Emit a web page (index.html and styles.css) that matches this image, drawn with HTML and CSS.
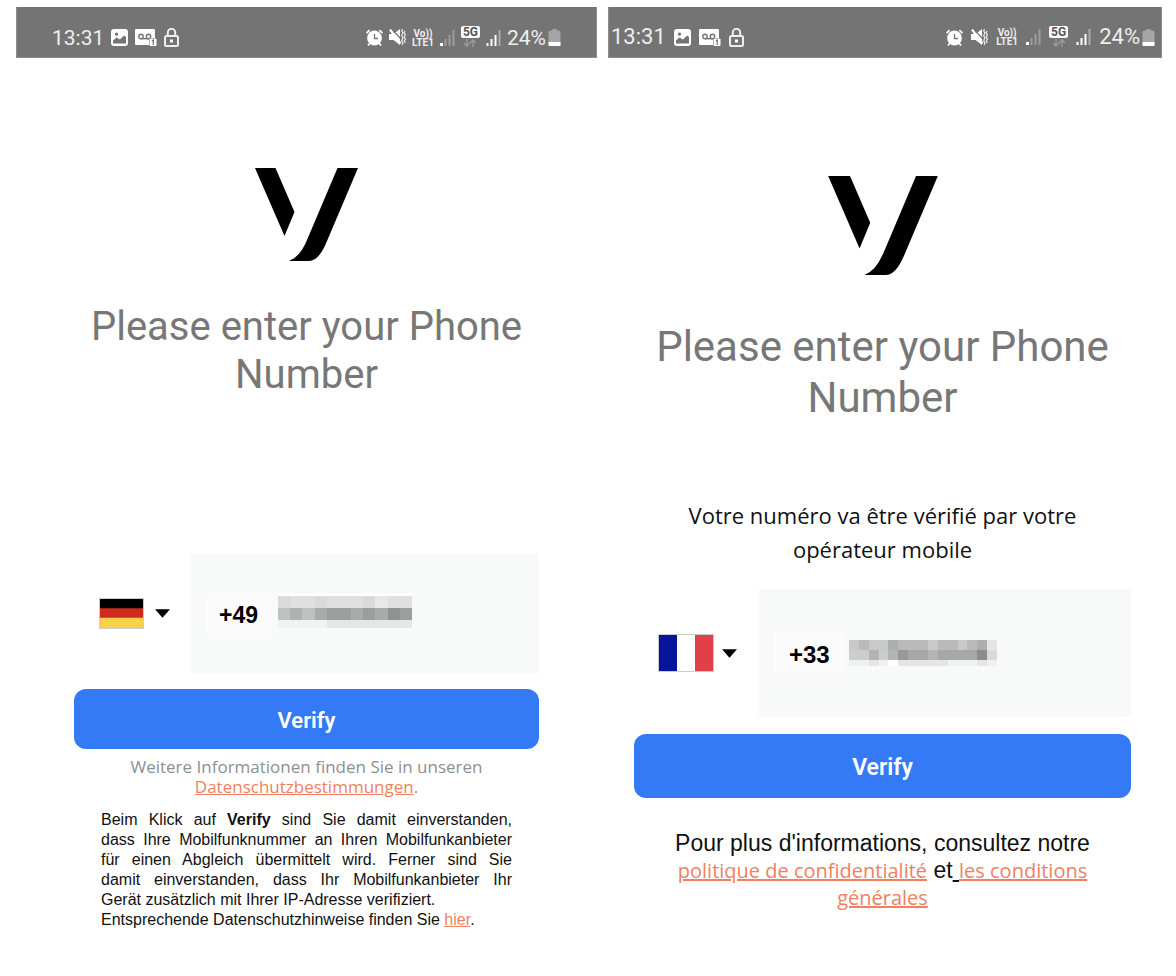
FILE: index.html
```html
<!DOCTYPE html>
<html lang="en">
<head>
    <meta charset="UTF-8">
    <meta name="viewport" content="width=device-width, initial-scale=1.0">
    <title>Verify your phone number</title>
    <link rel="stylesheet" href="styles.css">
</head>
<body>
    <!-- shared icons -->
    <svg class="sprite" width="0" height="0" aria-hidden="true">
        <symbol id="picture" viewBox="0 0 17 17">
            <path fill="#fff" fill-rule="evenodd" d="M3 0h11a3 3 0 0 1 3 3v11a3 3 0 0 1-3 3H3a3 3 0 0 1-3-3V3a3 3 0 0 1 3-3zM2 14.500h13V8l-2-1.500-4 4-3.500-2L2 11.500zM5.500 3.500a1.600 1.600 0 1 0 .01 0z"/>
        </symbol>
        <symbol id="voicemail" viewBox="0 0 22 17">
            <path fill="#fff" d="M1 0h18a1 1 0 0 1 1 1v8h-6v7H1a1 1 0 0 1-1-1V1a1 1 0 0 1 1-1z"/>
            <g fill="none" stroke="#747474" stroke-width="1.400">
                <circle cx="6" cy="7.500" r="2.200"/>
                <circle cx="13.500" cy="7.500" r="2.200"/>
                <path d="M6 9.700h8"/>
            </g>
            <rect x="14.500" y="9.500" width="7" height="7.500" rx="1" fill="#fff"/>
            <path d="M16.800 12l1.500-1v5" fill="none" stroke="#747474" stroke-width="1.200"/>
        </symbol>
        <symbol id="lock" viewBox="0 0 15 19">
            <rect x="1" y="8" width="13" height="10" rx="1.500" fill="none" stroke="#eee" stroke-width="2"/>
            <path d="M3.800 8V4.500a3.700 3.700 0 0 1 7.400 0V8" fill="none" stroke="#eee" stroke-width="2"/>
            <rect x="6" y="11.500" width="3" height="3" fill="#fff"/>
        </symbol>
        <symbol id="alarm" viewBox="0 0 17 17">
            <circle cx="8.500" cy="9" r="7.400" fill="#fff"/>
            <path d="M.6 4.200l3-3M16.400 4.200l-3-3M4 14l-2 2.500M13 14l2 2.500" fill="none" stroke="#fff" stroke-width="1.800"/>
            <path d="M8.500 5v4.500h3.500" fill="none" stroke="#747474" stroke-width="1.300"/>
        </symbol>
        <symbol id="mute" viewBox="0 0 17 17">
            <path fill="#fff" d="M0 5h4.500L11 0v16l-6.500-5H0z"/>
            <path d="M3.500 1l8 8.500" stroke="#747474" stroke-width="1.200"/>
            <path d="M1 .5l10.500 14" stroke="#fff" stroke-width="2.200"/>
            <path d="M13.500 0l-.8 2 1.200 2-1.200 2.500 1.200 2.500-1.200 2.500 1.200 2.500-.8 2M16 2l-.8 1.800 1.200 2-1.200 2 1.200 2.200-1.200 2 1.200 2" fill="none" stroke="#eee" stroke-width="1.200"/>
        </symbol>
        <symbol id="signal-low" viewBox="0 0 15 16">
            <rect y="13" width="3" height="3" fill="#fff"/>
            <path d="M5.500 9v7M9.500 5v11M13.500 0v16" stroke="#9c9c9c" stroke-width="2"/>
        </symbol>
        <symbol id="signal" viewBox="0 0 15 16">
            <path d="M1.500 13v3M5.500 9v7M9.500 5v11" stroke="#fff" stroke-width="2"/>
            <path d="M13.500 0v16" stroke="#aaa" stroke-width="2"/>
        </symbol>
        <symbol id="data" viewBox="0 0 14 8">
            <path d="M4 0v7M1 4l3 3 3-3M10 8V1M7 4l3-3 3 3" fill="none" stroke="#9c9c9c" stroke-width="1.300"/>
        </symbol>
        <symbol id="battery" viewBox="0 0 12 17">
            <path fill="#a5a5a5" d="M4 0h4v1.500h2a2 2 0 0 1 2 2V17H0V3.500a2 2 0 0 1 2-2h2z"/>
            <path fill="#fff" d="M0 13h12v2.500a1.500 1.500 0 0 1-1.500 1.500h-9A1.500 1.500 0 0 1 0 15.500z"/>
        </symbol>
        <symbol id="logo" viewBox="0 0 103 93">
            <path d="M0 0h20.500L39.500 44 29.500 68zM82.500 0H103L72 73q-8 20-18 20H34q11-4 18-21z"/>
        </symbol>
    </svg>

    <main class="screens">
        <section class="phone phone-de">
            <header class="status-bar">
                <div class="status-group">
                    <span class="clock">13:31</span>
                    <svg class="icon"><use href="#picture"/></svg>
                    <svg class="icon icon-wide"><use href="#voicemail"/></svg>
                    <svg class="icon icon-lock"><use href="#lock"/></svg>
                </div>
                <div class="status-group status-right">
                    <svg class="icon"><use href="#alarm"/></svg>
                    <svg class="icon"><use href="#mute"/></svg>
                    <span class="volte"><span>Vo))</span><span>LTE1</span></span>
                    <svg class="icon icon-signal"><use href="#signal-low"/></svg>
                    <span class="network"><span>5G</span><svg><use href="#data"/></svg></span>
                    <svg class="icon icon-signal"><use href="#signal"/></svg>
                    <span class="charge">24%<svg><use href="#battery"/></svg></span>
                </div>
            </header>
            <form class="content">
                <svg class="logo"><use href="#logo"/></svg>
                <h1>Please enter your Phone Number</h1>
                <div class="number-row">
                    <div class="country">
                        <svg class="flag" viewBox="0 0 45 31" preserveAspectRatio="none">
                            <path fill="#000" d="M0 0h45v11H0z"/>
                            <path fill="#cf2b1e" d="M0 10h45v11H0z"/>
                            <path fill="#f7d14a" d="M0 20h45v11H0z"/>
                        </svg>
                        <svg class="caret" viewBox="0 0 16 9"><path d="M0 0h16L8 9z"/></svg>
                        <select aria-label="Land"><option>DE</option></select>
                    </div>
                    <div class="number">
                        <input type="tel" value="+49" aria-label="Telefonnummer">
                        <svg class="masked" viewBox="0 0 11 35" preserveAspectRatio="none" shape-rendering="crispEdges">
                            <path fill="#fff" d="M0 0h11v3H0z"/>
                            <path fill="#dfe0e0" d="M0 3h11v12H0z"/>
                            <path fill="#d9dbda" d="M0 3h1v12H0zM3 3h1v12H3zM7 3h1v12H7z"/>
                            <path fill="#e8e8e8" d="M8 3h1v12H8z"/>
                            <path fill="#9c9d9d" d="M0 15h11v12H0z"/>
                            <path fill="#bfc1c0" d="M0 15h1v12H0zM2 15h1v12H2z"/>
                            <path fill="#b0b2b1" d="M1 15h1v12H1z"/>
                            <path fill="#a9aaaa" d="M3 15h1v12H3zM6 15h1v12H6zM8 15h1v12H8z"/>
                            <path fill="#909191" d="M9 15h1v12H9z"/>
                            <path fill="#e5e6e6" d="M0 27h11v8H0z"/>
                            <path fill="#f1f2f2" d="M0 27h4v8H0z"/>
                        </svg>
                    </div>
                </div>
                <button class="verify" type="submit">Verify</button>
                <p class="info">Weitere Informationen finden Sie in unseren <a href="#">Datenschutzbestimmungen</a>.</p>
                <p class="terms">Beim Klick auf <b>Verify</b> sind Sie damit einverstanden, dass&nbsp;Ihre Mobilfunknummer an Ihren Mobilfunkanbieter für einen Abgleich übermittelt wird. Ferner sind Sie damit&nbsp;einverstanden, dass Ihr Mobilfunkanbieter Ihr Gerät&nbsp;zusätzlich mit Ihrer IP-Adresse verifiziert.<br>Entsprechende Datenschutzhinweise finden Sie <a href="#">hier</a>.</p>
            </form>
        </section>

        <section class="phone phone-fr">
            <header class="status-bar">
                <div class="status-group">
                    <span class="clock">13:31</span>
                    <svg class="icon"><use href="#picture"/></svg>
                    <svg class="icon icon-wide"><use href="#voicemail"/></svg>
                    <svg class="icon icon-lock"><use href="#lock"/></svg>
                </div>
                <div class="status-group status-right">
                    <svg class="icon"><use href="#alarm"/></svg>
                    <svg class="icon"><use href="#mute"/></svg>
                    <span class="volte"><span>Vo))</span><span>LTE1</span></span>
                    <svg class="icon icon-signal"><use href="#signal-low"/></svg>
                    <span class="network"><span>5G</span><svg><use href="#data"/></svg></span>
                    <svg class="icon icon-signal"><use href="#signal"/></svg>
                    <span class="charge">24%<svg><use href="#battery"/></svg></span>
                </div>
            </header>
            <form class="content">
                <svg class="logo"><use href="#logo"/></svg>
                <h1>Please enter your Phone Number</h1>
                <p class="operator">Votre numéro va être vérifié par votre opérateur mobile</p>
                <div class="number-row">
                    <div class="country">
                        <svg class="flag" viewBox="0 0 54 36" preserveAspectRatio="none">
                            <path fill="#07159a" d="M0 0h18v36H0z"/>
                            <path fill="#fff" d="M18 0h18v36H18z"/>
                            <path fill="#e14049" d="M36 0h18v36H36z"/>
                        </svg>
                        <svg class="caret" viewBox="0 0 16 9"><path d="M0 0h16L8 9z"/></svg>
                        <select aria-label="Pays"><option>FR</option></select>
                    </div>
                    <div class="number">
                        <input type="tel" value="+33" aria-label="Numéro de téléphone">
                        <svg class="masked" viewBox="0 0 15 26" preserveAspectRatio="none" shape-rendering="crispEdges">
                            <path fill="#bababa" d="M0 0h14v10H0z"/>
                            <path fill="#c8c9c9" d="M0 0h1v10H0zM2 0h2v10H2zM8 0h1v10H8zM11 0h1v10h-1z"/>
                            <path fill="#adaeae" d="M4 0h1v10H4zM13 0h1v10h-1z"/>
                            <path fill="#e5e5e5" d="M14 0h1v10h-1z"/>
                            <path fill="#a6a8a8" d="M0 10h14v10H0z"/>
                            <path fill="#cccdcd" d="M0 10h2v10H0zM3 10h1v10H3z"/>
                            <path fill="#b3b4b4" d="M2 10h1v10H2zM4 10h1v10H4zM8 10h1v10H8z"/>
                            <path fill="#989999" d="M5 10h1v10H5z"/>
                            <path fill="#8b8c8c" d="M13 10h1v10h-1z"/>
                            <path fill="#dadada" d="M14 10h1v10h-1z"/>
                            <path fill="#f0f1f1" d="M0 20h15v6H0z"/>
                            <path fill="#e5e5e5" d="M2 20h1v6H2zM5 20h5v6H5zM13 20h1v6h-1z"/>
                            <path fill="#fff" d="M4 20h1v6H4z"/>
                        </svg>
                    </div>
                </div>
                <button class="verify" type="submit">Verify</button>
                <p class="info">Pour plus d'informations, consultez notre <a href="#">politique de confidentialité</a> et<u> </u><a href="#">les conditions générales</a></p>
            </form>
        </section>
    </main>
</body>
</html>
```

FILE: styles.css
```css
* {
    margin: 0;
    padding: 0;
    box-sizing: border-box;
}

body {
    background-color: #fff;
    font-family: Roboto, sans-serif;
}

.sprite {
    position: absolute;
}

.screens {
    display: grid;
    grid-template-columns: 581fr 554fr;
    gap: 11px;
    padding: 7px 14px 0 16px;
}

/* status bar */
.status-bar {
    display: flex;
    justify-content: space-between;
    align-items: center;
    height: 51px;
    padding: 11px 35px 0;
    background-color: #747474;
    border: 1px solid #8c8c8c;
    border-top: 0;
    color: #eee;
}

.status-group {
    display: flex;
    align-items: center;
    gap: 7px;
}

.status-right {
    gap: 6px;
}

.clock,
.charge {
    font-size: 21px;
    line-height: 24px;
}

.icon {
    width: 17px;
    height: 17px;
}

.icon-wide {
    width: 22px;
}

.icon-lock {
    width: 15px;
    height: 19px;
}

.icon-signal {
    width: 15px;
    height: 16px;
}

.volte {
    display: flex;
    flex-direction: column;
    align-items: center;
    font-size: 10px;
    font-weight: 700;
    line-height: 9px;
}

.network {
    display: flex;
    flex-direction: column;
    align-items: center;
    gap: 1px;
    margin-bottom: 2px;
}

.network span {
    padding: 0 2px;
    border-radius: 2px;
    background-color: #fff;
    color: #555;
    font-size: 12px;
    font-weight: 700;
    line-height: 12px;
}

.network svg {
    width: 14px;
    height: 8px;
}

.charge {
    display: flex;
    align-items: center;
    gap: 2px;
}

.charge svg {
    width: 13px;
    height: 17px;
}

/* content */
.content {
    display: flex;
    flex-direction: column;
    align-items: center;
    padding: 110px 58px 0;
}

.logo {
    width: 103px;
    height: 93px;
}

h1 {
    margin-top: 42px;
    color: #777;
    font-size: 40px;
    font-weight: 400;
    line-height: 48px;
    text-align: center;
}

.number-row {
    display: flex;
    width: 100%;
    height: 119px;
    margin-top: 155px;
}

.country {
    position: relative;
    display: flex;
    align-items: center;
    gap: 11px;
    width: 117px;
    padding-left: 25px;
}

.flag {
    width: 45px;
    height: 31px;
    border: 1px solid #ccc;
}

.caret {
    width: 15px;
    height: 9px;
}

.country select {
    position: absolute;
    inset: 0;
    width: 100%;
    appearance: none;
    border: 0;
    background: transparent;
    color: transparent;
}

.number {
    display: flex;
    flex: 1;
    align-items: center;
    gap: 7px;
    padding-left: 15px;
    background-color: #f8faf9;
}

.number input {
    width: 65px;
    height: 42px;
    padding: 3px 0 0 13px;
    border: 0;
    background-color: #fbfbfb;
    color: #000;
    font-family: "Liberation Sans", Arial, sans-serif;
    font-size: 23px;
    font-weight: 700;
}

.masked {
    width: 134px;
    height: 35px;
    margin-bottom: 6px;
}

.verify {
    width: 100%;
    height: 60px;
    margin-top: 16px;
    padding-top: 3px;
    border: 0;
    border-radius: 12px;
    background-color: #347af6;
    color: #fff;
    font-family: Roboto, sans-serif;
    font-size: 22px;
    font-weight: 600;
}

a {
    color: #f0805f;
}

.info {
    margin-top: 8px;
    color: #8f8f8f;
    font-family: "Open Sans", sans-serif;
    font-size: 17px;
    line-height: 20px;
    text-align: center;
}

.terms {
    margin: 13px 27px 0;
    color: #111;
    font-family: "Liberation Sans", Arial, sans-serif;
    font-size: 16px;
    line-height: 20px;
    text-align: justify;
}

/* the french phone is a little bigger */
.phone-fr .status-bar {
    padding: 10px 6px 0 2px;
}

.phone-fr .status-group {
    gap: 8px;
}

.phone-fr .clock,
.phone-fr .charge {
    font-size: 22px;
}

.phone-fr .content {
    padding: 118px 31px 0 26px;
}

.phone-fr .logo {
    width: 110px;
    height: 99px;
}

.phone-fr h1 {
    margin-top: 46px;
    font-size: 42px;
    line-height: 51px;
}

.operator {
    margin-top: 75px;
    padding: 0 40px;
    color: #111;
    font-family: "Open Sans", sans-serif;
    font-size: 22px;
    line-height: 34px;
    text-align: center;
}

.phone-fr .number-row {
    height: 128px;
    margin-top: 23px;
}

.phone-fr .country {
    gap: 8px;
    width: 125px;
    padding-left: 24px;
}

.phone-fr .flag {
    width: 56px;
    height: 38px;
}

.phone-fr .number input {
    width: 70px;
    padding-left: 15px;
    font-size: 24px;
}

.phone-fr .number {
    gap: 5px;
}

.phone-fr .masked {
    width: 148px;
    height: 26px;
    margin-bottom: 0;
}

.phone-fr .verify {
    height: 64px;
    margin-top: 17px;
    font-size: 23px;
}

.phone-fr .info {
    margin-top: 32px;
    padding: 0 36px;
    color: #111;
    font-family: "Liberation Sans", Arial, sans-serif;
    font-size: 23px;
    line-height: 27px;
}

.phone-fr .info a {
    font-family: "Open Sans", sans-serif;
    font-size: 20px;
}
```
